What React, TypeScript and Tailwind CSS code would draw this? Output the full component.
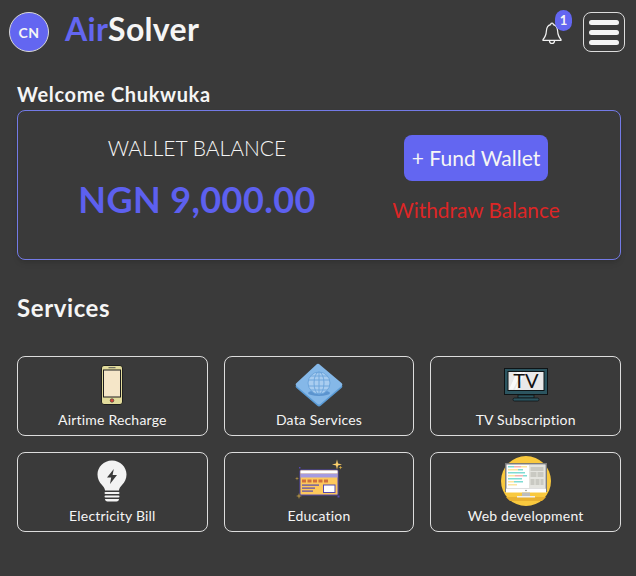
const font = "[font-family:Lato,'Noto_Sans',sans-serif]";

function Bell() {
  return (
    <svg width="24" height="26" viewBox="0 0 24 26" fill="none" stroke="#f3f3f3" strokeWidth="1.2" strokeLinejoin="round" strokeLinecap="round">
      <path d="M12 3.2c-1 0-1.4.7-1.4 1.5-3 .8-4 3.2-4.2 6.2-.2 3.4-.8 6-3.4 8.6v.9h18v-.9c-2.6-2.6-3.2-5.2-3.4-8.6-.2-3-1.2-5.4-4.2-6.2 0-.8-.4-1.5-1.4-1.500z" />
      <path d="M9.400 20.600c.1 1.800 1.200 2.900 2.600 2.900s2.500-1.100 2.600-2.900" />
    </svg>
  );
}

function Phone() {
  return (
    <svg width="22" height="40" viewBox="0 0 22 40">
      <rect x="0.5" y="0.5" width="21" height="39" rx="2.5" fill="#e2db9b" stroke="#1f1f1f" />
      <rect x="2.5" y="5" width="17" height="27" fill="#f5e6c8" stroke="#1f1f1f" />
      <rect x="7.5" y="2.2" width="7" height="1" fill="#555" />
      <circle cx="11" cy="35.5" r="1.8" fill="#d9453a" stroke="#333" strokeWidth="0.6" />
    </svg>
  );
}

function Globe() {
  return (
    <svg width="48" height="44" viewBox="0 0 48 44">
      <path d="M24 3 46.500 22a2 2 0 0 1 0 3L26 42.500a3 3 0 0 1-4 0L1.500 25a2 2 0 0 1 0-3L22 3a2 2 0 0 1 2 0z" fill="#5b9bd5" />
      <path d="M24 1 46.500 20a2 2 0 0 1 0 3L26 40.500a3 3 0 0 1-4 0L1.500 23a2 2 0 0 1 0-3L22 1a2 2 0 0 1 2 0z" fill="#85b8e8" />
      <ellipse cx="24" cy="30" rx="11" ry="3" fill="#5b94cf" />
      <circle cx="24" cy="20" r="11" fill="#a9cdf0" stroke="#6ea6dc" />
      <g fill="none" stroke="#6ea6dc" strokeWidth="1">
        <ellipse cx="24" cy="20" rx="5" ry="11" />
        <path d="M24 9v22M13.500 17h21M13.500 23h21M15.500 13h17M15.500 27h17" />
      </g>
    </svg>
  );
}

function Tv() {
  return (
    <svg width="44" height="35" viewBox="0 0 44 35">
      <rect x="0.5" y="1.5" width="43" height="26" fill="#2c5560" stroke="#0f1416" />
      <rect x="4" y="4.500" width="36" height="19" fill="#e9e9e9" stroke="#0f1416" />
      <path d="M5 22.500 13 5h5L9 22.500zM11 22.500 19 5h2l-8 17.500z" fill="#fafafa" />
      <text x="22" y="21" textAnchor="middle" fontSize="20" fontWeight="400" fontFamily="Lato, sans-serif" fill="#111">TV</text>
      <rect x="14" y="28" width="16" height="3" fill="#2c5560" stroke="#0f1416" strokeWidth="0.8" />
      <rect x="9" y="31" width="26" height="3" rx="1.5" fill="#2c5560" stroke="#0f1416" strokeWidth="0.8" />
    </svg>
  );
}

function Bulb() {
  return (
    <svg width="30" height="42" viewBox="0 0 30 42">
      <path d="M15 0.500C6.700.5.500 7 .500 14.600c0 4.400 1.800 7.600 4.300 10.200 1.800 1.900 3 3.800 3.300 5.700h13.800c.3-1.900 1.500-3.800 3.300-5.700 2.500-2.600 4.300-5.800 4.300-10.200C29.500 7 23.300.5 15 .5z" fill="#f3f3f3" />
      <path d="M16.800 9 10 17.600h4.200L13 24l7-9h-4.400z" fill="#3a3a3a" />
      <rect x="7.500" y="32" width="15" height="2" rx="1" fill="#f3f3f3" />
      <rect x="7.500" y="35.500" width="15" height="2" rx="1" fill="#f3f3f3" />
      <path d="M8 39h14c0 1.500-1 2.500-2.500 2.500h-9C9 41.500 8 40.500 8 39z" fill="#f3f3f3" />
    </svg>
  );
}

function CardIcon() {
  return (
    <svg width="48" height="44" viewBox="0 0 48 44">
      <rect x="5" y="11" width="38" height="25" rx="1" fill="#fdc85c" stroke="#5548b0" />
      <rect x="5.500" y="11.500" width="37" height="3" fill="#fff" />
      <rect x="5.500" y="14.500" width="37" height="4" fill="#a59be0" />
      <g fill="#d0703c">
        <rect x="7" y="20.500" width="4" height="3" />
        <rect x="12.500" y="20.500" width="4" height="3" />
        <rect x="18" y="20.500" width="4" height="3" />
        <rect x="23.500" y="20.500" width="4" height="3" />
        <rect x="29" y="20.500" width="4" height="3" />
      </g>
      <rect x="7" y="25.500" width="17" height="1.200" fill="#5548b0" />
      <rect x="7" y="28.500" width="13" height="1.200" fill="#5548b0" />
      <rect x="7" y="31.500" width="11" height="1.200" fill="#5548b0" />
      <rect x="28.500" y="26" width="11.500" height="7.500" fill="#fff" stroke="#5548b0" />
      <path d="M42 0.500 43 4.500 47 5.500 43 6.500 42 10.500 41 6.500 37 5.500 41 4.500z" fill="#fdd06c" />
      <path d="M45.500 6.500l.5 1.500 1.500.5-1.500.5-.5 1.500-.5-1.500-1.500-.5 1.500-.5z" fill="#d6a944" />
      <path d="M2 17.500l.5 1.500 1.500.5-1.500.5-.5 1.500-.5-1.500-1.500-.5 1.500-.5z" fill="#a88a44" />
      <path d="M4 34l.8 2.200 2.200.8-2.200.8L4 40l-.8-2.200L1 37l2.200-.8z" fill="#a88a44" />
      <rect x="42.500" y="36.500" width="2" height="2" fill="#5548b0" />
      <rect x="4" y="8" width="1.500" height="1.500" fill="#5548b0" />
    </svg>
  );
}

function WebDev() {
  return (
    <svg width="50" height="50" viewBox="0 0 50 50">
      <circle cx="25" cy="25" r="25" fill="#f9c93e" />
      <path d="M5 41h40a25 25 0 0 1-4 4H9a25 25 0 0 1-4-4z" fill="#e8b02f" />
      <rect x="4" y="7" width="42" height="29" fill="#7c7c7c" />
      <rect x="5.500" y="8.500" width="39" height="24" fill="#fff" />
      <rect x="5" y="32.500" width="40" height="4" fill="#fff" />
      <g>
        <rect x="7" y="10" width="6" height="1.500" fill="#7fdbd3" />
        <rect x="13" y="10" width="7" height="1.500" fill="#f6b1b1" />
        <rect x="20" y="10" width="6" height="1.500" fill="#fce6a0" />
        <rect x="7" y="13" width="10" height="1.500" fill="#fce6a0" />
        <rect x="17" y="13" width="5" height="1.500" fill="#7fdbd3" />
        <rect x="7" y="16" width="4" height="1.500" fill="#7fdbd3" />
        <rect x="11" y="16" width="13" height="1.500" fill="#7fdbd3" />
        <rect x="7" y="19" width="7" height="1.500" fill="#fce6a0" />
        <rect x="14" y="19" width="8" height="1.500" fill="#f6b1b1" />
        <rect x="22" y="19" width="4" height="1.500" fill="#7fdbd3" />
        <rect x="7" y="22" width="14" height="1.500" fill="#7fdbd3" />
        <rect x="7" y="25" width="6" height="1.500" fill="#fce6a0" />
        <rect x="13" y="25" width="9" height="1.500" fill="#7fdbd3" />
        <rect x="7" y="28" width="9" height="1.500" fill="#fce6a0" />
      </g>
      <rect x="28" y="9" width="16" height="23" fill="#e4e4df" />
      <g fill="#c9c9c2">
        <rect x="29.500" y="11" width="13" height="4" />
        <rect x="29.500" y="16" width="6" height="5" />
        <rect x="36.500" y="16" width="6" height="5" />
        <rect x="29.500" y="23" width="4" height="6" />
        <rect x="34.500" y="23" width="4" height="6" />
        <rect x="39.500" y="23" width="3" height="6" />
      </g>
      <rect x="21" y="36.500" width="8" height="3.500" fill="#bdbdbd" />
      <rect x="16" y="40" width="18" height="1.500" fill="#f0f0f0" />
      <circle cx="25" cy="34.500" r="0.800" fill="#888" />
    </svg>
  );
}

const services = [
  { name: "Airtime Recharge", icon: <Phone /> },
  { name: "Data Services", icon: <Globe /> },
  { name: "TV Subscription", icon: <Tv /> },
  { name: "Electricity Bill", icon: <Bulb /> },
  { name: "Education", icon: <CardIcon /> },
  { name: "Web development", icon: <WebDev /> },
];

export default function App() {
  return (
    <div className={`${font} w-[636px] h-[576px] overflow-hidden bg-[#3a3a3a] text-[#f5f5f5] pl-[17px] pr-[15px]`}>
      <header className="h-[63px] flex items-center -ml-[8px] -mr-[4px] pt-[1px]">
        <div className="w-[40px] h-[40px] rounded-full bg-[#6366f1] border border-[#d8d8d8] flex items-center justify-center text-[14px] font-bold tracking-[0.5px]">CN</div>
        <div className="ml-[16px] -mt-[6px] text-[32px] tracking-[0.3px] font-bold leading-none">
          <span className="text-[#6366f1]">Air</span>Solver
        </div>
        <div className="ml-auto relative mr-[19px] mt-[2px]">
          <Bell />
          <span className="absolute -top-[10px] left-[15px] w-[17px] h-[21px] rounded-full bg-[#6366f1] flex items-center justify-center text-[13px] font-bold">1</span>
        </div>
        <button className="w-[42px] h-[40px] rounded-[8px] border border-[#dcdcdc] flex flex-col items-center justify-center gap-[5px]">
          <span className="w-[30px] h-[5px] rounded-full bg-[#f3f3f3]" />
          <span className="w-[30px] h-[5px] rounded-full bg-[#f3f3f3]" />
          <span className="w-[30px] h-[5px] rounded-full bg-[#f3f3f3]" />
        </button>
      </header>

      <h2 className="mt-[18px] text-[20px] tracking-[0.65px] font-bold leading-[26px]">Welcome Chukwuka</h2>

      <section className="mt-[3px] h-[150px] rounded-[8px] border border-[#737ae6] flex justify-between px-[60px] pt-[23px] shadow-md">
        <div className="w-[238px] flex flex-col items-center">
          <div className="text-[21px] leading-[28px] font-light whitespace-nowrap">WALLET BALANCE</div>
          <div className="mt-[15px] text-[36px] leading-[44px] tracking-[0.4px] font-bold text-[#5d60ef] whitespace-nowrap">NGN 9,000.00</div>
        </div>
        <div className="w-[168px] flex flex-col items-center">
          <button className="w-[144px] h-[46px] mt-[1px] rounded-[8px] bg-[#6366f1] text-[21px] whitespace-nowrap">+ Fund Wallet</button>
          <div className="mt-[15px] text-[20.8px] leading-[28px] text-[#dc2626] whitespace-nowrap">Withdraw Balance</div>
        </div>
      </section>

      <h2 className="mt-[32px] text-[24px] tracking-[0.6px] font-bold leading-[32px]">Services</h2>

      <div className="mt-[32px] grid grid-cols-3 gap-x-[16px] gap-y-[16px]">
        {services.map((s) => (
          <div key={s.name} className="h-[80px] rounded-[8px] border border-[#dcdcdc] flex flex-col items-center">
            <div className="h-[53px] mt-[1px] flex items-center justify-center">{s.icon}</div>
            <div className="-mt-[1px] text-[14px] leading-[20px] tracking-[0.2px]">{s.name}</div>
          </div>
        ))}
      </div>
    </div>
  );
}
